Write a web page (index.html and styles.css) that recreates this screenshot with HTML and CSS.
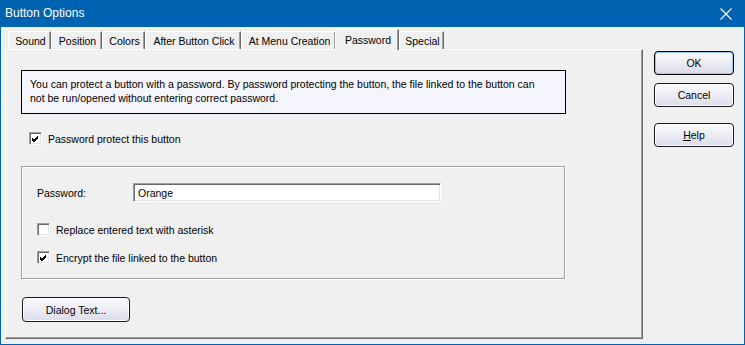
FILE: index.html
```html
<!DOCTYPE html>
<html lang="en">
<head>
    <meta charset="UTF-8">
    <title>Button Options</title>
    <link rel="stylesheet" href="styles.css">
</head>
<body>
    <div class="window">
        <div class="titlebar">
            <span class="title">Button Options</span>
            <svg class="close" width="12" height="12" viewBox="0 0 12 12">
                <path d="M0.5 0.5 L11.5 11.5 M11.5 0.5 L0.5 11.5" stroke="#fff" stroke-width="1.1" fill="none"/>
            </svg>
        </div>

        <div class="client">
            <div class="tab-area">
                <div class="tabs">
                    <div class="tab tab-sound">Sound</div>
                    <div class="tab tab-position">Position</div>
                    <div class="tab tab-colors">Colors</div>
                    <div class="tab tab-after">After Button Click</div>
                    <div class="tab tab-menu">At Menu Creation</div>
                    <div class="tab tab-password active">Password</div>
                    <div class="tab tab-special">Special</div>
                </div>

                <div class="panel">
                    <div class="info-box">
                        You can protect a button with a password. By password protecting the button, the file linked to the button can<br>
                        not be run/opened without entering correct password.
                    </div>

                    <label class="check main-check">
                        <span class="box checked"></span>
                        Password protect this button
                    </label>

                    <div class="group">
                        <div class="field-row">
                            <span class="field-label">Password:</span>
                            <div class="text-input">Orange</div>
                        </div>
                        <label class="check">
                            <span class="box"></span>
                            Replace entered text with asterisk
                        </label>
                        <label class="check">
                            <span class="box checked"></span>
                            Encrypt the file linked to the button
                        </label>
                    </div>

                    <div class="btn btn-dialog">Dialog Text...</div>
                </div>
            </div>

            <div class="side-buttons">
                <div class="btn btn-default">OK</div>
                <div class="btn">Cancel</div>
                <div class="btn btn-help"><u>H</u>elp</div>
            </div>
        </div>
    </div>
</body>
</html>
```

FILE: styles.css
```css
body {
    margin: 0;
    padding: 0;
    font-family: 'Liberation Sans', Arial, sans-serif;
    font-size: 10.5px;
    color: #000;
    background: #f0f0f0;
}
.window {
    width: 745px;
    height: 345px;
    box-sizing: border-box;
    border: 1px solid #0063b1;
    border-top: none;
    background-color: #f0f0f0;
    display: flex;
    flex-direction: column;
}
.titlebar {
    height: 27px;
    flex-shrink: 0;
    background-color: #0063b1; /* azul do Windows */
    color: white;
    display: flex;
    align-items: center;
    justify-content: space-between;
    padding: 0 12px 0 4px;
    font-size: 12px;
}
.title {
    padding-bottom: 1px;
}
.close {
    display: block;
}
.client {
    flex: 1;
    display: flex;
    padding: 2px 0 5px 4px;
}
.tab-area {
    width: 638px;
    display: flex;
    flex-direction: column;
}
.tabs {
    display: flex;
    height: 20px;
    padding-left: 3px;
    align-items: flex-end;
    position: relative;
    z-index: 1;
}
.tab {
    height: 18px;
    box-sizing: border-box;
    line-height: 18px;
    text-align: center;
    padding-left: 2px;
    border-top: 1px solid #fff;
    border-left: 1px solid #fff;
    border-right: 1px solid #696969;
    box-shadow: inset -1px 0 #a0a0a0;
    background-color: #f0f0f0;
    white-space: nowrap;
}
.tab-sound { width: 43px; }
.tab-position { width: 51px; }
.tab-colors { width: 43px; }
.tab-after { width: 96px; }
.tab-menu { width: 95px; }
.tab-password { width: 64px; }
.tab-special { width: 45px; }
.tab.active {
    height: 21px;
    margin-bottom: -1px;
    margin-left: -1px;
    line-height: 20px;
}
.panel {
    flex: 1;
    border-top: 1px solid #fff;
    border-left: 1px solid #fff;
    border-right: 1px solid #696969;
    border-bottom: 1px solid #696969;
    box-shadow: inset -1px -1px #a0a0a0;
    padding: 20px 0 0 15px;
    display: flex;
    flex-direction: column;
    align-items: flex-start;
}
.info-box {
    width: 545px;
    height: 44px;
    box-sizing: border-box;
    border: 1px solid #000;
    background-color: #f5f5fd;
    padding: 6px 8px 0 8px;
    line-height: 14px;
    white-space: nowrap;
}
.check {
    display: flex;
    align-items: center;
    gap: 6px;
    height: 13px;
}
.main-check {
    margin: 18px 0 0 8px;
}
.box {
    width: 13px;
    height: 13px;
    box-sizing: border-box;
    border-top: 1px solid #a0a0a0;
    border-left: 1px solid #a0a0a0;
    border-right: 1px solid #fff;
    border-bottom: 1px solid #fff;
    box-shadow: inset 1px 1px #696969, inset -1px -1px #e3e3e3;
    background-color: #fff;
    flex-shrink: 0;
}
.box.checked {
    background: #fff url("data:image/svg+xml;utf8,<svg xmlns='http://www.w3.org/2000/svg' width='11' height='11'><path d='M2 5 L4 7 L8 3 M2 6 L4 8 L8 4 M2 7 L4 9 L8 5' stroke='%23000' stroke-width='1' fill='none'/></svg>") no-repeat 0 0;
}
.group {
    width: 544px;
    height: 113px;
    box-sizing: border-box;
    margin-top: 21px;
    border: 1px solid #a0a0a0;
    box-shadow: inset 1px 1px #fff, 1px 1px #fff;
    padding: 16px 0 0 15px;
    display: flex;
    flex-direction: column;
}
.field-row {
    display: flex;
    align-items: center;
}
.field-label {
    width: 96px;
}
.text-input {
    width: 308px;
    height: 19px;
    box-sizing: border-box;
    background-color: #fff;
    border-top: 1px solid #a0a0a0;
    border-left: 1px solid #a0a0a0;
    border-right: 1px solid #fff;
    border-bottom: 1px solid #fff;
    box-shadow: inset 1px 1px #696969, inset -1px -1px #e3e3e3;
    padding: 2px 0 0 4px;
    line-height: 14px;
}
.group .check {
    margin-top: 21px;
}
.group .check + .check {
    margin-top: 15px;
}
.btn {
    width: 80px;
    height: 24px;
    box-sizing: border-box;
    border: 1px solid #1a1a1a;
    border-radius: 4px;
    background: linear-gradient(#fbfbfe, #dcdcea);
    box-shadow: inset 0 0 0 1px #fff;
    display: flex;
    align-items: center;
    justify-content: center;
}
.btn-dialog {
    width: 108px;
    height: 25px;
    margin-top: 18px;
    margin-left: 1px;
}
.side-buttons {
    display: flex;
    flex-direction: column;
    padding: 22px 0 0 11px;
}
.btn-default {
    box-shadow: inset 0 0 0 1px #9cc6f2;
    border-color: #000;
}
.side-buttons .btn + .btn {
    margin-top: 8px;
}
.btn-help {
    margin-top: 16px !important;
}
```
